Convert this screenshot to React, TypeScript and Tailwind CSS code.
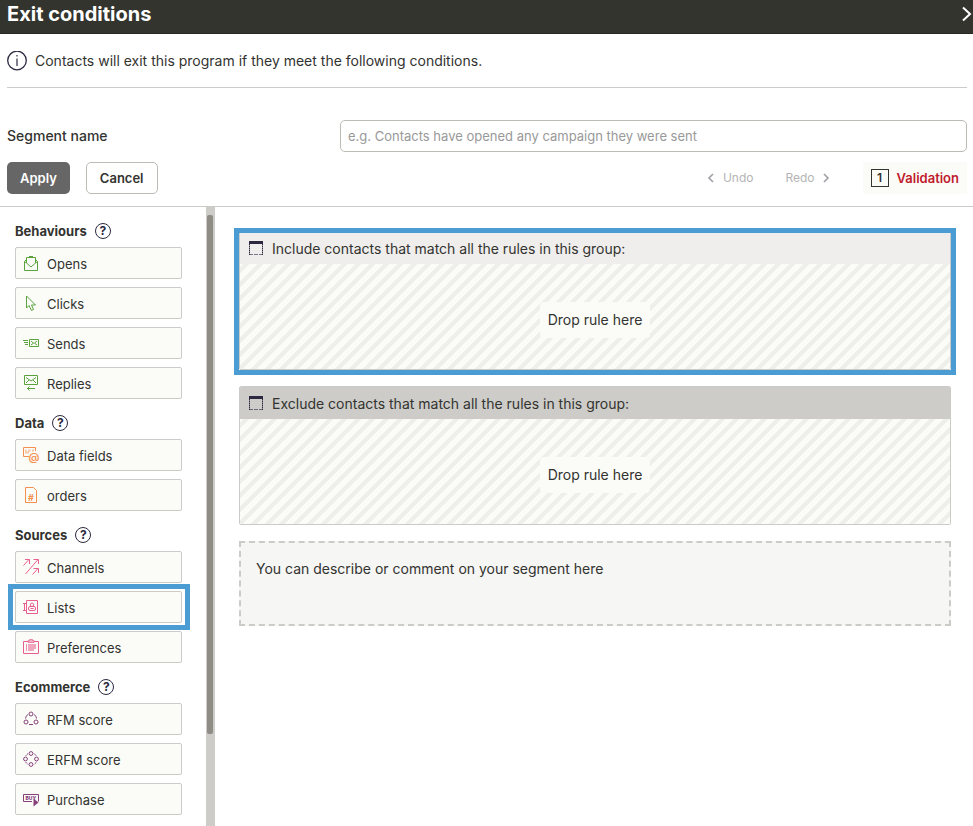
import { useState, type ReactNode } from "react";

type Rule = { label: string; icon: ReactNode; highlighted?: boolean };
type RuleGroup = { title: string; color: string; rules: Rule[] };

const ruleGroups: RuleGroup[] = [
  {
    title: "Behaviours",
    color: "text-[#5aa23c]",
    rules: [
      {
        label: "Opens",
        icon: (
          <>
            <path d="M3.5 4.5 1.5 6.5v9h13v-9l-2-2M1.5 6.500 3.500 8M14.500 6.500 12.500 8" />
            <path d="M3.500 8V2.500h9V8L8 12zM6 1.500h4" />
          </>
        ),
      },
      {
        label: "Clicks",
        icon: <path d="M3.500 1v12l2.500-2.500L8.500 15.500l2-1-2-4.500h4L3.500 1Z" />,
      },
      {
        label: "Sends",
        icon: (
          <>
            <path d="M6.500 4.500h9v7h-9zM0 5.500h5M1 7.500h4M2 9.500h3" />
            <path d="m8 6 3 2.500L14 6M8 10l2-1.500M14 10l-2-1.500" />
          </>
        ),
      },
      {
        label: "Replies",
        icon: (
          <>
            <path d="M1.500.5h13v9h-13zM4 13.500h8M6.500 11.500l-2 2 2 2" />
            <path d="M3 2.500 8 6l5-3.500M3 8l3-3M13 8l-3-3" />
          </>
        ),
      },
    ],
  },
  {
    title: "Data",
    color: "text-[#f58f4f]",
    rules: [
      {
        label: "Data fields",
        icon: (
          <>
            <path d="M6 9.500H.5v-9h12V4" />
            <path d="M2 3.500h1.500M5 3.500h2.500M9 3.500h2M2 5.500h4" strokeWidth="2" opacity="0.500" />
            <text x="5.500" y="13.500" fontSize="11" fontWeight="600" fill="currentColor" stroke="none">
              @
            </text>
          </>
        ),
      },
      {
        label: "orders",
        icon: (
          <>
            <path d="M2.500.5h8l3 3v12h-11z" />
            <text x="8" y="13.500" fontSize="9" fontWeight="700" textAnchor="middle" fill="currentColor" stroke="none">
              #
            </text>
          </>
        ),
      },
    ],
  },
  {
    title: "Sources",
    color: "text-[#ea5f92]",
    rules: [
      {
        label: "Channels",
        icon: (
          <path d="M.5 6.500l5.500-6M2 .5h4.500V5M2.500 15 15 .5M10.500.5h5V5M9.500 15.500l5.500-6M10.500 9.500h5V14" />
        ),
      },
      {
        label: "Lists",
        highlighted: true,
        icon: (
          <>
            <path d="M3.500 1.500h11v13h-11zM0 4.500h4M0 11.500h4M1.500 4.500v7" />
            <circle cx="9" cy="5.800" r="1.700" />
            <rect x="5.500" y="7.500" width="7" height="4" rx="1.500" />
            <path d="M7.500 9.500h3" />
          </>
        ),
      },
      {
        label: "Preferences",
        icon: (
          <>
            <path d="M5 2.500H.5v12h15v-12H11" />
            <path d="M5 3.500v-2h1.500V.5h3v1H11v2z" fill="currentColor" fillOpacity="0.500" strokeOpacity="0.700" />
            <path d="M3.500 5v7" opacity="0.700" />
            <path d="M5 5h8v5h-2v2H5z" fill="currentColor" stroke="none" opacity="0.550" />
          </>
        ),
      },
    ],
  },
  {
    title: "Ecommerce",
    color: "text-[#86417b]",
    rules: [
      {
        label: "RFM score",
        icon: (
          <>
            <circle cx="8" cy="3" r="2" />
            <circle cx="3" cy="11" r="2" />
            <circle cx="13" cy="11" r="2" />
            <path d="M5 3.500Q2.500 5 2.500 7.500M11 3.500q2.500 1.500 2.500 4M6 13.500h4" />
          </>
        ),
      },
      {
        label: "ERFM score",
        icon: (
          <>
            <circle cx="8" cy="2.500" r="1.900" />
            <circle cx="2.500" cy="8" r="1.900" />
            <circle cx="13.500" cy="8" r="1.900" />
            <circle cx="8" cy="13.500" r="1.900" />
            <path d="M5 2.500 2.500 5M11 2.500 13.500 5M2.500 11 5 13.500M13.500 11 11 13.500" strokeDasharray="2 0.500" />
          </>
        ),
      },
      {
        label: "Purchase",
        icon: (
          <>
            <path d="M9 10.500H.5v-7h15v7" />
            <text x="7.800" y="8.900" fontSize="5" fontWeight="800" textAnchor="middle" fill="currentColor" stroke="none">
              BUY
            </text>
            <path d="M10.500 7.500v8l5-4z" fill="currentColor" stroke="none" />
          </>
        ),
      },
    ],
  },
];

function HelpButton({ topic }: { topic: string }) {
  return (
    <button
      type="button"
      aria-label={`Help with ${topic}`}
      className="flex size-4 items-center justify-center rounded-full border border-[#2c2840] text-xs leading-none font-bold text-[#2c2840]"
    >
      ?
    </button>
  );
}

function RuleButton({ rule, color }: { rule: Rule; color: string }) {
  return (
    <div className="relative">
      <button
        type="button"
        className="flex h-8 w-full items-center gap-2 rounded-xs border border-[#cbcbc8] bg-[#fbfcf8] px-[7px] text-[13px] leading-5"
      >
        <svg width="16" height="16" viewBox="0 0 16 16" fill="none" stroke="currentColor" className={color}>
          {rule.icon}
        </svg>
        <span className="pt-[2px]">{rule.label}</span>
      </button>
      {rule.highlighted && (
        <div className="pointer-events-none absolute -inset-y-[7px] -right-2 -left-[7px] border-5 border-[#4a9cd3]" />
      )}
    </div>
  );
}

function DropGroup({ title, exclude }: { title: string; exclude?: boolean }) {
  return (
    <section className="relative">
      <div className="overflow-hidden rounded-xs border border-[#cbcbc8]">
        <h2
          className={`flex h-8 items-center gap-2 px-2 text-sm ${exclude ? "bg-[#cdccc8]" : "bg-[#efeeec]"}`}
        >
          <svg width="16" height="16" viewBox="0 0 16 16" fill="none" stroke="#2c2840">
            <path d="M1 2.500h14" strokeWidth="3" />
            <path d="M1.500 4v11M14.500 4v11" opacity="0.500" />
            <path d="M1.500 4v11M14.500 4v11" strokeDasharray="1 1" />
            <path d="M1 14.500h14" strokeDasharray="4 1" opacity="0.600" />
          </svg>
          <span className="pt-[2px]">{title}</span>
        </h2>
        <div className="flex h-[105px] items-center justify-center bg-[#fbfcf8] bg-[linear-gradient(135deg,transparent_12%,#eeefea_12%,#eeefea_34%,transparent_34%,transparent_62%,#eeefea_62%,#eeefea_84%,transparent_84%)] bg-size-[14px_14px] pt-[6px]">
          <p className="rounded-sm bg-[#fbfcf8] px-2 py-2 text-sm">Drop rule here</p>
        </div>
      </div>
      {!exclude && (
        <div className="pointer-events-none absolute -inset-x-[5px] -top-[3px] -bottom-[5px] border-5 border-[#4a9cd3]" />
      )}
    </section>
  );
}

export default function App() {
  const [name, setName] = useState("");

  return (
    <div className="flex h-screen flex-col bg-white font-[Inter,sans-serif] text-sm text-[#333330]">
      <header className="flex h-[34px] shrink-0 items-center justify-between border-b border-[#2a2825] bg-[#33342e] pb-[6px] pl-[7px] text-white">
        <h1 className="text-xl font-bold">Exit conditions</h1>
        <button type="button" aria-label="Close panel">
          <svg width="12" height="16" viewBox="0 0 12 16" fill="none" stroke="currentColor" strokeWidth="2">
            <path d="m2 1.500 7 6.500-7 6.500" />
          </svg>
        </button>
      </header>

      <div className="mr-[6px] ml-[7px] flex h-[54px] shrink-0 items-center gap-2 border-b border-[#cbcbc8]">
        <svg width="20" height="20" viewBox="0 0 20 20" fill="none" stroke="#2c2840">
          <circle cx="10" cy="9.500" r="9.300" strokeWidth="1.300" />
          <path d="M10 4v1.500M10 7.500V15" strokeWidth="1.200" />
        </svg>
        <p>Contacts will exit this program if they meet the following conditions.</p>
      </div>

      <form
        className="shrink-0 border-b border-[#cbcbc8] pt-8 pr-[6px] pb-3 pl-[7px]"
        onSubmit={(e) => e.preventDefault()}
      >
        <div className="flex items-center">
          <label htmlFor="segment-name" className="w-[333px] shrink-0 font-medium">
            Segment name
          </label>
          <input
            id="segment-name"
            type="text"
            value={name}
            onChange={(e) => setName(e.target.value)}
            placeholder="e.g. Contacts have opened any campaign they were sent"
            className="h-8 min-w-0 flex-1 rounded-[5px] border border-[#bcbcb6] px-[7px] text-[13px] placeholder:text-[#999999]"
          />
        </div>
        <div className="mt-[10px] flex h-8 items-center text-[13px]">
          <button type="submit" className="h-8 rounded-[5px] bg-[#666666] px-[13px] font-semibold text-white">
            Apply
          </button>
          <button
            type="button"
            className="ml-4 h-8 rounded-[5px] border border-[#bcbcb6] px-[13px] font-semibold"
          >
            Cancel
          </button>
          <button type="button" className="ml-auto flex items-center gap-2 text-xs text-[#b4b4b4]">
            <svg width="8" height="10" viewBox="0 0 8 10" fill="none" stroke="#a2a2a8" strokeWidth="1.700">
              <path d="M6 1 2 5l4 4" />
            </svg>
            Undo
          </button>
          <button type="button" className="ml-8 flex items-center gap-2 text-xs text-[#b4b4b4]">
            Redo
            <svg width="8" height="10" viewBox="0 0 8 10" fill="none" stroke="#a2a2a8" strokeWidth="1.700">
              <path d="m1 1 4 4-4 4" />
            </svg>
          </button>
          <button
            type="button"
            className="ml-8 flex h-8 items-center gap-2 bg-[#fbfcf8] px-2 font-semibold text-[#c01a2c]"
          >
            <span className="flex size-[18px] items-center justify-center border border-[#333330] text-xs text-[#333330]">
              1
            </span>
            Validation
          </button>
        </div>
      </form>

      <div className="flex min-h-0 flex-1">
        <aside className="flex w-[215px] shrink-0 overflow-hidden">
          <div className="flex-1 pr-6 pl-[15px]">
            {ruleGroups.map((group) => (
              <section key={group.title}>
                <div className="flex h-10 items-center gap-2 pt-2">
                  <h2 className="text-[13px] leading-4 font-bold">{group.title}</h2>
                  <HelpButton topic={group.title} />
                </div>
                <div className="flex flex-col gap-2">
                  {group.rules.map((rule) => (
                    <RuleButton key={rule.label} rule={rule} color={group.color} />
                  ))}
                </div>
              </section>
            ))}
          </div>
          <div className="w-[9px] bg-[#cdccc8] px-px pt-2">
            <div className="h-[85%] w-[6px] rounded-xs bg-[#8f8c85]" />
          </div>
        </aside>

        <main className="flex min-w-0 flex-1 flex-col gap-4 overflow-hidden pt-6 pr-[22px] pl-6">
          <DropGroup title="Include contacts that match all the rules in this group:" />
          <DropGroup exclude title="Exclude contacts that match all the rules in this group:" />
          <textarea
            aria-label="Segment description"
            defaultValue="You can describe or comment on your segment here"
            className="h-[85px] w-full shrink-0 resize-none border-2 border-dashed border-[#cbcbc8] bg-[#f6f6f5] px-[15px] py-4 text-sm"
          />
        </main>
      </div>
    </div>
  );
}
